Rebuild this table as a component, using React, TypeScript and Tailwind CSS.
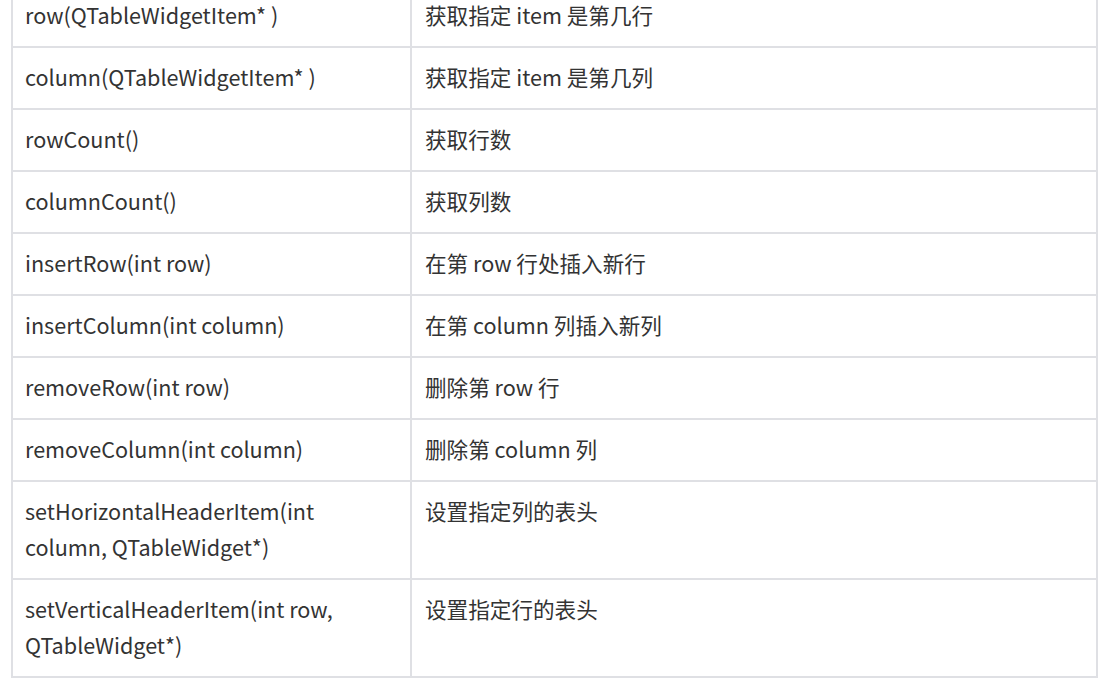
const rows: [string, string][] = [
  ["row(QTableWidgetItem* )", "获取指定 item 是第几行"],
  ["column(QTableWidgetItem* )", "获取指定 item 是第几列"],
  ["rowCount()", "获取行数"],
  ["columnCount()", "获取列数"],
  ["insertRow(int row)", "在第 row 行处插入新行"],
  ["insertColumn(int column)", "在第 column 列插入新列"],
  ["removeRow(int row)", "删除第 row 行"],
  ["removeColumn(int column)", "删除第 column 列"],
  ["setHorizontalHeaderItem(int column, QTableWidget*)", "设置指定列的表头"],
  ["setVerticalHeaderItem(int row, QTableWidget*)", "设置指定行的表头"],
]

const App = () => {
  return (
    <div className="w-[1107px] h-[689px] overflow-hidden bg-white">
      <table
        className="ml-[11px] -mt-[16px] w-[1087px] table-fixed border-collapse text-[21.6px] leading-[36px] text-[#333]"
        style={{ fontFamily: '"Noto Sans CJK SC", "Noto Sans", sans-serif' }}
      >
        <colgroup>
          <col className="w-[399px]" />
          <col />
        </colgroup>
        <tbody>
          {rows.map(([method, desc]) => (
            <tr key={method}>
              <td className="border-2 border-[#dfe0e4] px-[12px] pt-[11px] pb-[13px] align-top break-words">
                {method}
              </td>
              <td className="border-2 border-[#dfe0e4] px-[13px] pt-[11px] pb-[13px] align-top">
                {desc}
              </td>
            </tr>
          ))}
        </tbody>
      </table>
    </div>
  )
}

export default App
